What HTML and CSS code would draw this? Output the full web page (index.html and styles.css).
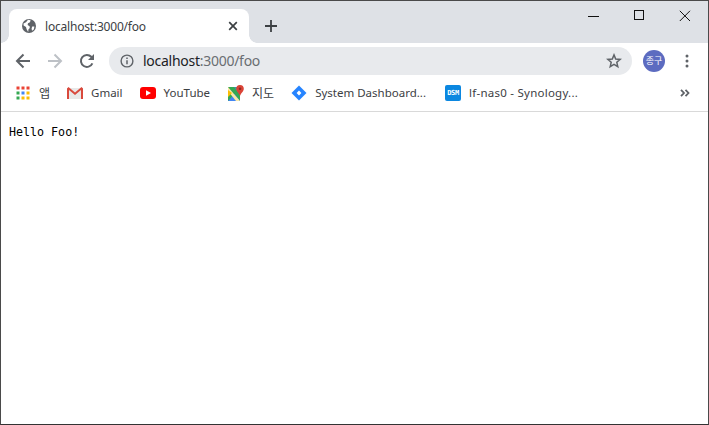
FILE: index.html
```html
<!DOCTYPE html>
<html lang="ko">
<head>
<meta charset="utf-8">
<title>localhost:3000/foo</title>
<link rel="stylesheet" href="styles.css">
</head>
<body>
<div class="window">
  <div class="titlebar">
    <div class="tab">
      <svg class="globe" width="16" height="16" viewBox="0 0 16 16"><circle cx="8" cy="8" r="7" fill="#5f6368"/><path d="M2.500 5.500 5 4.200 7 1.800 9.600 2.200 9 4.200 7 5.200 6.600 7 8.600 8.200 8.800 10 7.400 11.600 7.200 14 5.600 11.200 5 9 2.600 7.600Z" fill="#fff"/><path d="M11.200 8.600 13.400 8.600 12.800 11.400 11 12.800 10.600 10.400Z" fill="#fff"/></svg>
      <span class="tab-title">localhost:3000/foo</span>
      <svg class="tab-close" width="10" height="10" viewBox="0 0 10 10"><path d="M1.200 1.200 8.800 8.800M8.800 1.200 1.200 8.800" stroke="#3c4043" stroke-width="1.700"/></svg>
    </div>
    <svg class="newtab" width="14" height="14" viewBox="0 0 14 14"><path d="M7 1v12M1 7h12" stroke="#3c4043" stroke-width="1.800"/></svg>
    <div class="controls">
      <svg width="12" height="12" viewBox="0 0 12 12"><path d="M1 6.500h11" stroke="#111" stroke-width="1"/></svg>
      <svg width="12" height="12" viewBox="0 0 12 12"><rect x="1.500" y=".5" width="9" height="9" fill="none" stroke="#111" stroke-width="1"/></svg>
      <svg width="12" height="12" viewBox="0 0 12 12"><path d="M.8 .8 11 11M11 .8 .8 11" stroke="#111" stroke-width="1"/></svg>
    </div>
  </div>

  <div class="toolbar">
    <svg class="nav" width="16" height="16" viewBox="0 0 16 16"><path d="M15 8H2M8.500 1.500 2 8l6.500 6.500" fill="none" stroke="#5f6368" stroke-width="2"/></svg>
    <svg class="nav" width="16" height="16" viewBox="0 0 16 16"><path d="M1 8h13M7.500 1.500 14 8l-6.500 6.500" fill="none" stroke="#bdc1c6" stroke-width="2"/></svg>
    <svg class="nav" width="16" height="16" viewBox="0 0 16 16"><path d="M13.400 10.400A6 6 0 1 1 12.300 3.800L14 5.600" fill="none" stroke="#5f6368" stroke-width="2"/><path d="M15 1v6H9z" fill="#5f6368"/></svg>
    <div class="omnibox">
      <svg class="info" width="14" height="14" viewBox="0 0 14 14"><circle cx="7" cy="7" r="5.900" fill="none" stroke="#5f6368" stroke-width="1.400"/><path d="M7 6.200v4M7 3.500v1.500" stroke="#5f6368" stroke-width="1.500"/></svg>
      <span class="url"><span class="host">localhost</span>:3000/foo</span>
      <svg class="star" width="16" height="16" viewBox="0 0 16 16"><path d="M8 1.900 9.700 6l4.500.4-3.400 2.900 1 4.400L8 11.400l-3.800 2.300 1-4.400L1.800 6.400 6.300 6Z" fill="none" stroke="#5f6368" stroke-width="1.500"/></svg>
    </div>
    <div class="avatar">종구</div>
    <svg class="menu" width="4" height="14" viewBox="0 0 4 14"><circle cx="2" cy="2" r="1.500" fill="#5f6368"/><circle cx="2" cy="7" r="1.500" fill="#5f6368"/><circle cx="2" cy="12" r="1.500" fill="#5f6368"/></svg>
  </div>

  <div class="bookmarks">
    <div class="bm bm-apps">
      <svg width="14" height="14" viewBox="0 0 14 14">
        <rect x="0.500" y="0.500" width="3" height="3" fill="#ea4335"/><rect x="5.500" y="0.500" width="3" height="3" fill="#ea4335"/><rect x="10.500" y="0.500" width="3" height="3" fill="#ea4335"/>
        <rect x="0.500" y="5.500" width="3" height="3" fill="#34a853"/><rect x="5.500" y="5.500" width="3" height="3" fill="#4285f4"/><rect x="10.500" y="5.500" width="3" height="3" fill="#fbbc05"/>
        <rect x="0.500" y="10.500" width="3" height="3" fill="#34a853"/><rect x="5.500" y="10.500" width="3" height="3" fill="#fbbc05"/><rect x="10.500" y="10.500" width="3" height="3" fill="#fbbc05"/>
      </svg>
      <span class="ko">앱</span>
    </div>
    <div class="bm bm-gmail">
      <svg width="16" height="12" viewBox="0 0 16 12"><path d="M0 1h16v11H0z" fill="#e8e8e8"/><path d="M2 12V3l6 5 6-5v9h2V1.500L14.500 0 8 5.500 1.500 0 0 1.500V12z" fill="#d9493c"/></svg>
      <span>Gmail</span>
    </div>
    <div class="bm bm-yt">
      <svg width="16" height="12" viewBox="0 0 16 12"><rect width="16" height="12" rx="3" fill="#f00"/><path d="M6 3.300v5.400L11 6z" fill="#fff"/></svg>
      <span>YouTube</span>
    </div>
    <div class="bm bm-maps">
      <svg width="16" height="16" viewBox="0 0 16 16"><path d="M0 2h12v14H0z" fill="#34a853"/><path d="M6 2h6v8z" fill="#4285f4" opacity=".6"/><path d="M0 16 6.500 9 12 16z" fill="#4285f4"/><path d="M0 2 12 16H8L0 6z" fill="#fbe9a8"/><path d="M0 12 4 8 0 5z" fill="#fbbc05"/><path d="M12 0a3.800 3.800 0 0 1 3.800 3.800C15.800 6.500 13 8 12 11 11 8 8.200 6.500 8.200 3.800A3.800 3.800 0 0 1 12 0z" fill="#db4437"/><circle cx="12" cy="3.800" r="1.300" fill="#8c2a22"/></svg>
      <span class="ko">지도</span>
    </div>
    <div class="bm bm-jira">
      <svg width="16" height="16" viewBox="0 0 16 16"><path d="M8 .5 15.500 8 8 15.500 .5 8z" fill="#2684ff"/><path d="M8 5.600 10.400 8 8 10.400 5.600 8z" fill="#fff"/></svg>
      <span>System Dashboard...</span>
    </div>
    <div class="bm bm-dsm">
      <div class="dsm">DSM</div>
      <span class="syn">lf-nas0 - Synology...</span>
    </div>
    <svg class="more" width="10" height="8" viewBox="0 0 10 8"><path d="M1 .8 4 4 1 7.200M5.500 .8 8.500 4 5.500 7.200" fill="none" stroke="#5f6368" stroke-width="1.800"/></svg>
  </div>

  <main class="content">Hello Foo!</main>
</div>
</body>
</html>
```

FILE: styles.css
```css
* { box-sizing: border-box; }
html, body { margin: 0; height: 100%; }
body { background: #fff; overflow: hidden; }
svg { display: block; flex: none; }

.window {
  height: 425px;
  border: 1px solid #4a4a4a;
  border-bottom-color: #333;
  display: flex;
  flex-direction: column;
  font-family: "Noto Sans", "Noto Sans CJK KR", sans-serif;
  color: #3c4043;
}

.titlebar {
  height: 42px;
  flex: none;
  background: #dee1e6;
  display: flex;
  align-items: flex-start;
  padding: 8px 0 0 8px;
}

.tab {
  position: relative;
  width: 240px;
  height: 34px;
  background: #fff;
  border-radius: 8px 8px 0 0;
  display: flex;
  align-items: center;
  padding: 0 11px 0 12px;
}
.tab::before, .tab::after {
  content: "";
  position: absolute;
  bottom: 0;
  width: 8px;
  height: 8px;
}
.tab::before { left: -8px; background: radial-gradient(circle at 0 0, #dee1e6 7.500px, #fff 8px); }
.tab::after { right: -8px; background: radial-gradient(circle at 100% 0, #dee1e6 7.500px, #fff 8px); }

.tab-title { font-size: 12px; margin-left: 8px; flex: 1; white-space: nowrap; letter-spacing: -.2px; }
.newtab { margin: 10px 0 0 15px; }

.controls {
  margin: 1px 0 0 auto;
  display: flex;
  gap: 34px;
  padding-right: 17px;
}

.toolbar {
  height: 35px;
  flex: none;
  background: #fff;
  display: flex;
  align-items: center;
  padding: 0 15px 0 14px;
}
.nav { margin-right: 16px; }
.nav:nth-child(3) { margin-right: 14px; }

.omnibox {
  width: 523px;
  height: 28px;
  background: #e8eaed;
  border-radius: 14px;
  display: flex;
  align-items: center;
  padding: 0 10px 0 11px;
  font-size: 14px;
  color: #6a6e72;
}
.url { margin-left: 9px; flex: 1; letter-spacing: -.27px; white-space: nowrap; }
.host { color: #202124; }

.avatar {
  width: 22px;
  height: 22px;
  margin-left: 11px;
  border-radius: 50%;
  background: #5c6bc0;
  color: #fff;
  font-size: 9px;
  line-height: 22px;
  text-align: center;
  font-family: "Noto Sans CJK KR", sans-serif;
  flex: none;
}
.menu { margin-left: 20px; }

.bookmarks {
  height: 34px;
  flex: none;
  background: #fff;
  border-bottom: 1px solid #d9d9d9;
  display: flex;
  align-items: center;
  padding: 0 18px 4px 15px;
  font-size: 11.500px;
  white-space: nowrap;
}
.bm { display: flex; align-items: center; }
.bm span { margin-left: 8px; }
.bm .ko { font-family: "Noto Sans CJK KR", sans-serif; font-size: 12px; }
.bm .syn { letter-spacing: .25px; }
.bm-apps span { margin-left: 9px; }
.bm-gmail { margin-left: 17px; }
.bm-yt { margin-left: 17px; }
.bm-maps { margin-left: 18px; }
.bm-jira { margin-left: 17px; }
.bm-dsm { margin-left: 19px; }
.more { margin-left: auto; }

.dsm {
  width: 16px;
  height: 16px;
  background: #0b87e0;
  border-radius: 2px;
  color: #fff;
  font: bold 7px/16px "DejaVu Sans Mono", monospace;
  letter-spacing: -.3px;
  text-align: center;
}

.content {
  flex: 1;
  padding: 12px 8px;
  font-family: "DejaVu Sans Mono", monospace;
  font-size: 11.670px;
  line-height: 16px;
  color: #000;
}
```
